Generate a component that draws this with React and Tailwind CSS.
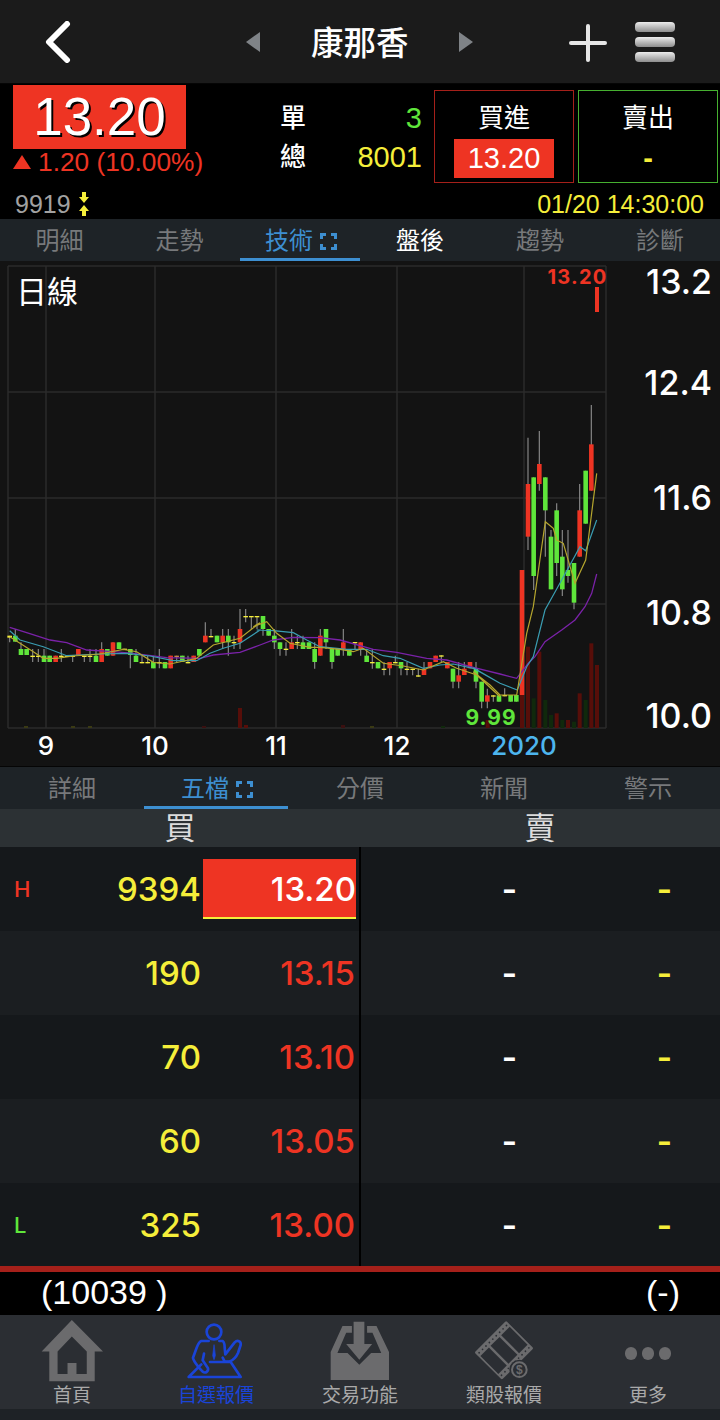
import React from "react";

const cjk = { fontFamily: '"Liberation Sans","Noto Sans CJK TC",sans-serif' };
const inter = { fontFamily: 'Inter,"Noto Sans CJK TC",sans-serif' };

// [x, top, bottom, wickTop, wickBottom, colour] in zoom coordinates
const G = "#5fe63b", R = "#ee3423", Y = "#f5ee3a";
const a3 = [
  [29,137,143,137,157,"y"],[46,137,155,117,155,G],[63,177,195,157,195,G],[80,177,195,177,195,G],[98,197,201,177,216,"y"],[115,197,201,177,216,"y"],[132,197,216,177,216,G],[149,197,216,197,216,G],[167,197,216,197,216,R],[184,197,201,177,216,"y"],[201,197,201,197,201,"y"],[218,197,201,197,216,"y"],[235,177,195,177,195,R],[253,197,201,197,216,"y"],[270,197,201,177,216,"y"],[288,197,216,177,216,G],[305,177,216,157,216,R],[322,177,197,177,197,G],[339,157,197,157,197,R],[357,157,177,157,177,G],[374,176,180,176,180,"y"],[391,177,195,177,235,G],[408,197,216,177,216,G],[426,216,220,197,220,"y"],[443,216,220,197,220,"y"],[460,216,235,197,235,G],[478,216,220,177,235,"y"],[495,216,235,216,235,G],[512,197,235,197,235,R],[530,197,201,197,216,"#c9884a"],[547,197,216,197,216,G],[564,216,220,197,220,"y"],[581,197,216,197,216,R],[598,177,197,177,197,G],[616,137,157,97,157,R],[633,138,142,117,142,"y"],[651,137,157,137,157,G],[668,137,157,117,177,R],[685,137,157,117,197,G],[702,156,160,137,177,"y"],[720,117,157,57,177,R],[737,78,82,57,97,"y"],[754,78,82,78,117,"y"],[771,78,82,78,117,"y"]
].map(([x, t, b, wt, wb, c]) => [x / 3, 590 + t / 3, 590 + b / 3, 590 + wt / 3, 590 + wb / 3, c]);
const a4 = [
  [69,78,117,78,137,G],[86,117,137,117,137,G],[103,137,157,117,177,G],[120,157,177,157,197,G],[138,176,180,157,197,"y"],[155,157,177,117,177,R],[172,156,160,137,177,"y"],[189,157,177,137,177,G],[207,157,177,157,177,G],[224,177,216,157,236,G],[241,137,197,117,197,R],[258,117,157,117,177,G],[276,177,216,177,236,G],[293,177,197,177,197,G],[310,157,177,117,197,R],[328,177,197,177,197,G],[345,156,160,156,177,"y"],[362,157,177,157,197,R],[380,197,216,177,216,G],[397,216,220,177,236,"y"],[414,216,235,216,235,G],[432,236,240,216,256,"y"],[449,216,235,216,256,R],[466,216,220,197,220,"y"],[483,216,235,216,256,G],[501,236,240,216,256,"y"],[518,236,240,236,256,"y"],[535,256,260,236,260,"y"],[552,237,255,216,255,R],[570,216,235,216,235,R],[587,197,216,197,216,R],[604,196,200,196,216,"y"],[622,216,235,216,235,R],[639,236,275,236,295,G],[656,256,275,216,295,R],[673,236,255,216,255,R],[690,216,235,216,235,R],[708,236,275,216,295,G],[725,275,335,275,355,G],[742,316,335,296,355,R],[760,316,320,316,335,"y"],[777,316,335,316,335,G]
].map(([x, t, b, wt, wb, c]) => [240 + x / 3, 590 + t / 3, 590 + b / 3, 590 + wt / 3, 590 + wb / 3, c]);
const a2 = [
  [194,885,889,865,889,"y"],[212,885,905,885,905,G],[229,885,905,885,905,G],[246,510,885,510,885,R],[264,252,410,113,450,R],[281,232,528,232,570,G],[298,192,252,93,272,R],[316,232,331,232,470,G],[333,410,568,390,568,G],[350,331,489,310,528,G],[367,470,568,390,588,G],[384,510,528,390,548,G],[402,489,608,489,628,G],[419,331,470,252,470,R],[437,212,371,212,371,G],[454,133,272,15,272,R]
].map(([x, t, b, wt, wb, c]) => [440 + x / 3, 400 + t / 3, 400 + b / 3, 400 + wt / 3, 400 + wb / 3, c]);
const candles = [...a3, ...a4, ...a2];

const pts = (list, ox, oy) => list.map(([x, y]) => `${(ox + x / 3).toFixed(1)},${(oy + y / 3).toFixed(1)}`).join(" ");
const line = (a, b, c) => [pts(a, 0, 590), pts(b, 240, 590), pts(c, 440, 400)].join(" ");
const purple = line(
  [[29,112],[80,128],[150,150],[200,158],[260,180],[340,185],[400,190],[500,203],[600,205],[640,195],[720,187],[780,165]],
  [[100,150],[160,142],[240,143],[300,150],[400,178],[470,187],[560,205],[620,210],[700,232],[780,252]],
  [[230,835],[265,790],[285,770],[315,725],[365,690],[405,660],[435,620],[455,580],[470,522]]
);
const teal = line(
  [[29,122],[60,150],[130,170],[200,197],[300,192],[380,190],[450,198],[520,212],[590,212],[630,190],[670,175],[720,160],[780,120]],
  [[50,120],[100,122],[160,128],[200,150],[240,170],[320,178],[380,178],[430,197],[480,205],[550,235],[600,225],[640,222],[700,235],[780,280]],
  [[100,803],[180,850],[232,870],[260,800],[280,770],[315,630],[365,540],[420,440],[437,452],[470,360]]
);
const yellow = line(
  [[29,140],[60,160],[100,185],[130,205],[170,205],[220,198],[300,192],[370,178],[410,185],[460,217],[510,222],[590,205],[640,165],[720,145],[780,98]],
  [[40,110],[80,95],[110,130],[150,160],[210,172],[240,172],[300,178],[340,185],[370,175],[430,220],[490,228],[550,240],[610,215],[650,235],[710,255],[780,320]],
  [[100,815],[150,855],[180,885],[230,885],[260,700],[280,620],[316,365],[340,385],[350,420],[370,430],[405,550],[437,480],[470,220]]
);
const DR = "#570e09", DG = "#10290c";
const vols = [
  [246,885,DR],[264,740,DR],[281,895,DG],[298,755,DR],[316,900,DG],[333,945,DG],[350,940,DR],[367,960,DG],[384,960,DR],[402,965,DG],[419,880,DR],[437,900,DG],[454,730,DR],[471,795,DR],[143,960,DR]
].map(([x, t, c]) => [440 + x / 3, 400 + t / 3, c]).concat([[240, 708, DR], [246, 725, DR], [26, 726, "#3a3a14"], [73, 726, "#3a3a14"], [90, 726, "#3a3a14"], [204, 726, "#3a1010"], [343, 725, "#3a1010"], [372, 726, "#3a3a14"], [443, 726, DG]]);

function Chart() {
  return (
    <svg className="block" width="720" height="505" viewBox="0 261 720 505">
      {[266, 392, 498, 604, 728].map((y) => <line key={y} x1="8" x2="606" y1={y} y2={y} stroke="#2b2b2b" strokeWidth="1.5" />)}
      {[46, 155, 276, 397, 524, 606, 8].map((x) => <line key={x} x1={x} x2={x} y1="266" y2="728" stroke="#2b2b2b" strokeWidth="1.5" />)}
      {vols.map(([x, t, c], i) => <rect key={i} x={x - 2} y={t} width="4" height={728 - t} fill={c} />)}
      {candles.map(([x, t, b, wt, wb, c], i) => (
        <g key={i}>
          <line x1={x} x2={x} y1={wt} y2={wb} stroke="#858585" strokeWidth="1.2" />
          <rect x={x - 2.3} y={t} width="4.6" height={b - t} fill={c === "y" ? Y : c} />
        </g>
      ))}
      <polyline points={purple} fill="none" stroke="#7a22a8" strokeWidth="1.3" />
      <polyline points={teal} fill="none" stroke="#3a9db2" strokeWidth="1.2" />
      <polyline points={yellow} fill="none" stroke="#b5a62e" strokeWidth="1.2" />
      <rect x="595" y="287" width="4" height="25" fill={R} />
      <g style={inter}>
        <text x="16" y="303" fill="#fff" fontSize="31" style={cjk}>日線</text>
        <text x="577.5" y="284" fill={R} fontSize="20" fontWeight="700" textAnchor="middle" letterSpacing="1.2">13.20</text>
        <text x="491" y="725" fill={G} fontSize="21" fontWeight="700" textAnchor="middle" letterSpacing="1">9.99</text>
        {[[13.2, 294], [12.4, 395], [11.6, 510], [10.8, 625], [10.0, 728]].map(([v, y]) => (
          <text key={y} x="712" y={y} fill="#fff" fontSize="34" fontWeight="500" textAnchor="end">{v.toFixed(1)}</text>
        ))}
        {[["9", 46], ["10", 155], ["11", 276], ["12", 397]].map(([v, x]) => (
          <text key={v} x={x} y="755" fill="#fff" fontSize="26" fontWeight="500" textAnchor="middle">{v}</text>
        ))}
        <text x="524" y="755" fill="#4db5ee" fontSize="26" fontWeight="500" textAnchor="middle">2020</text>
      </g>
    </svg>
  );
}

function Corners() {
  return (
    <svg width="17" height="17" viewBox="0 0 17 17" fill="none" stroke="#3d8fd1" strokeWidth="3">
      <path d="M1.5 6V1.5H6M11 1.5H15.5V6M15.5 11V15.5H11M6 15.5H1.5V11" />
    </svg>
  );
}

function Tab({ label, active, white, corners, w }) {
  return (
    <div className={`relative h-full flex items-center justify-center gap-[7px] pt-[2px] ${corners ? "pl-[2px]" : ""} ${w} ${active ? "text-[#3d8fd1]" : white ? "text-white" : "text-[#77797b]"}`}>
      <span>{label}</span>
      {corners && <Corners />}
      {active && <div className="absolute left-0 right-0 bottom-0 h-[3px] bg-[#3d8fd1]" />}
    </div>
  );
}

const rows = [
  { q: "9394", p: "13.20", tag: "H", hi: true },
  { q: "190", p: "13.15" },
  { q: "70", p: "13.10" },
  { q: "60", p: "13.05" },
  { q: "325", p: "13.00", tag: "L" },
];

const Ic = "#6b6b6d";
const NavBg = "#2b2e33";

function HomeIcon() {
  return (
    <svg width="63" height="63" viewBox="30 15 190 190">
      <path fill={Ic} fillRule="evenodd" d="M123 15 217 110H192V200H55V110H32ZM123 65 80 110V178H110V145H137V178H168V110Z" />
    </svg>
  );
}
function PersonIcon() {
  return (
    <svg className="shrink-0" width="68" height="68" viewBox="0 0 204 204" fill="none" stroke="#1a44d8" strokeWidth="8" strokeLinejoin="round" strokeLinecap="round">
      <circle cx="96" cy="45" r="22" />
      <path d="M80 72H58C52 74 48 82 44 92L33 122C33 128 46 148 62 164C70 170 80 164 78 154L62 130 66 110" />
      <path d="M112 72H122C127 76 128 84 128 92L130 112 158 76C166 68 178 72 176 84L168 108C162 122 152 130 142 134H128L122 122" />
      <path d="M58 142 20 180H176L146 135H84" />
      <path d="M96 84 92 116 96 128 100 116Z" fill="#1a44d8" strokeWidth="2" />
    </svg>
  );
}
function InboxIcon() {
  return (
    <svg width="60" height="60" viewBox="60 20 178 178">
      <path fill={Ic} d="M62 195V112L97 35H125V55H108L82 115H112L147 150 182 115H212L186 55H170V35H198L235 112V195Z" />
      <path fill={Ic} d="M130 22H162V88H185L147 135 108 88H130Z" />
    </svg>
  );
}
function FilmIcon() {
  const holes = [];
  for (let x = -58; x <= 58; x += 14.5) {
    holes.push(<rect key={`a${x}`} x={x - 2.5} y="-50" width="5" height="5" rx="2" fill={NavBg} />);
    holes.push(<rect key={`b${x}`} x={x - 2.5} y="45" width="5" height="5" rx="2" fill={NavBg} />);
  }
  return (
    <svg className="shrink-0" width="72" height="68" viewBox="0 0 216 204">
      <g transform="translate(108 100) rotate(-45)">
        <rect x="-67" y="-58" width="134" height="116" rx="4" fill={Ic} />
        {holes}
        <rect x="-62" y="-38" width="36" height="76" fill={NavBg} />
        <rect x="-19" y="-38" width="38" height="76" fill={NavBg} />
        <rect x="26" y="-38" width="36" height="76" fill={NavBg} />
      </g>
      <circle cx="154" cy="158" r="30" fill={NavBg} />
      <circle cx="154" cy="158" r="22" fill={NavBg} stroke={Ic} strokeWidth="6" />
      <text x="154" y="171" textAnchor="middle" fontSize="36" fontWeight="700" fill={Ic} style={cjk}>$</text>
    </svg>
  );
}

function NavItem({ icon, label, active }) {
  return (
    <div className="w-[144px] flex flex-col items-center">
      <div className="h-[62px] flex items-center justify-center">{icon}</div>
      <div className={`text-[19px] leading-[22px] mt-[3px] ${active ? "text-[#1a44d8]" : "text-[#a9a9a9]"}`}>{label}</div>
    </div>
  );
}

const Bar = () => <div className="h-[10px] rounded-[4px] bg-gradient-to-b from-[#ededed] to-[#8e8e8e]" />;

export default function App() {
  return (
    <div className="w-[720px] h-[1420px] bg-black overflow-hidden flex flex-col" style={cjk}>
      {/* top bar */}
      <div className="h-[84px] shrink-0 bg-[#1b1b1b] border-b border-[#050505] flex items-center">
        <svg className="ml-[43px]" width="28" height="42" viewBox="0 0 28 42" fill="none" stroke="#fff" strokeWidth="6">
          <path d="M24 3 6 21 24 39" strokeLinecap="round" strokeLinejoin="round" />
        </svg>
        <div className="ml-[175px] w-0 h-0 border-y-[10px] border-y-transparent border-r-[14px] border-r-[#7f8387]" />
        <div className="ml-[51px] text-[32.5px] text-white leading-none font-medium pt-[5px]">康那香</div>
        <div className="ml-[50px] w-0 h-0 border-y-[10px] border-y-transparent border-l-[14px] border-l-[#7f8387]" />
        <svg className="ml-[96px] mt-[2px]" width="38" height="38" viewBox="0 0 38 38" fill="#e6e6e6">
          <rect x="0" y="17" width="38" height="4" rx="2" />
          <rect x="17" y="0" width="4" height="38" rx="2" />
        </svg>
        <div className="ml-[28px] w-[40px] flex flex-col gap-[5px]">
          <Bar /><Bar /><Bar />
        </div>
      </div>

      {/* quote */}
      <div className="h-[135px] bg-black relative shrink-0">
        <div className="flex h-[100px]">
          <div className="w-[280px] pl-[13px] pt-[1px]">
            <div className="w-[173px] h-[64px] bg-[#ee3423] text-white text-[53px] leading-[64px] text-center [text-shadow:2px_2px_0_#000]">13.20</div>
            <div className="flex items-center -mt-[2px] text-[#ee3423] text-[26.3px] leading-[30px]">
              <div className="w-0 h-0 border-x-[9px] border-x-transparent border-b-[14px] border-b-[#ee3423] mr-[7px]" />
              <span>1.20 (10.00%)</span>
            </div>
          </div>
          <div className="w-[142px] text-[26px] leading-[39px] pt-[15px]">
            <div className="flex justify-between"><span className="text-white font-medium">單</span><span className="text-[#5fe63b] text-[29px]">3</span></div>
            <div className="flex justify-between"><span className="text-white font-medium">總</span><span className="text-[#f5ee3a] text-[29px]">8001</span></div>
          </div>
          <div className="ml-[12px] mt-[6px] w-[140px] h-[93px] border-[1.5px] border-[#a5201a] flex flex-col items-center pt-[11px]">
            <div className="text-white text-[26px] leading-[32px]">買進</div>
            <div className="mt-[5px] w-[100px] h-[39px] bg-[#ee3423] text-white text-[29px] leading-[39px] text-center">13.20</div>
          </div>
          <div className="ml-[4px] mt-[6px] w-[140px] h-[93px] border-[1.5px] border-[#46b030] flex flex-col items-center pt-[11px]">
            <div className="text-white text-[26px] leading-[32px]">賣出</div>
            <div className="mt-[5px] h-[39px] text-[#f5ee3a] text-[29px] leading-[39px] font-bold">-</div>
          </div>
        </div>
        <div className="flex items-center justify-between pl-[15px] pr-[16px] mt-[5px]">
          <div className="flex items-center gap-[8px] text-[#a2a2a2] text-[25px] leading-[30px]">
            <span>9919</span>
            <svg width="10" height="24" viewBox="0 0 10 24" fill="#f5ee3a">
              <path d="M3 0H7V5H10L5 11 0 5H3ZM5 13 10 19H7V24H3V19H0Z" />
            </svg>
          </div>
          <div className="text-[#f5ee3a] text-[25px] leading-[30px]">01/20 14:30:00</div>
        </div>
      </div>

      {/* tabs 1 */}
      <div className="h-[42px] shrink-0 bg-[#1e2327] flex items-center text-[24px]">
        <Tab label="明細" w="w-[119px]" />
        <Tab label="走勢" w="w-[121px]" />
        <Tab label="技術" active corners w="w-[120px]" />
        <Tab label="盤後" white w="w-[120px]" />
        <Tab label="趨勢" w="w-[120px]" />
        <Tab label="診斷" w="w-[120px]" />
      </div>

      <div className="h-[505px] shrink-0 bg-[#131313]"><Chart /></div>

      {/* tabs 2 */}
      <div className="h-[43px] shrink-0 bg-[#1e2327] border-t border-[#050505] flex items-center text-[24px]">
        <Tab label="詳細" w="w-[144px]" />
        <Tab label="五檔" active corners w="w-[144px]" />
        <Tab label="分價" w="w-[144px]" />
        <Tab label="新聞" w="w-[144px]" />
        <Tab label="警示" w="w-[144px]" />
      </div>

      <div className="h-[38px] shrink-0 bg-[#2c3134] flex items-center text-[#dcdcdc] text-[31px] pt-[3px]">
        <div className="w-[360px] text-center">買</div>
        <div className="w-[360px] text-center">賣</div>
      </div>

      {/* order book */}
      <div className="shrink-0 h-[419px] overflow-hidden" style={inter}>
        {rows.map((r, i) => (
          <div key={r.p} className={`h-[84px] flex items-center font-medium ${i % 2 ? "bg-[#1b1e21]" : "bg-[#15181b]"}`}>
            <div className={`w-[46px] pl-[14px] text-[22px] ${r.tag === "H" ? "text-[#ee3423]" : "text-[#5fe63b]"}`}>{r.tag}</div>
            <div className="w-[155px] text-right text-[#f5ee3a] text-[33px] leading-none pt-[1px]">{r.q}</div>
            {r.hi ? (
              <div className="ml-[2px] w-[153px] h-[60px] bg-[#ee3423] border-b-2 border-[#f5ee3a] text-white text-[33px] leading-[60px] text-right">{r.p}</div>
            ) : (
              <div className="ml-[2px] w-[152px] text-[#ee3423] text-[33px] leading-none text-right pt-[1px]">{r.p}</div>
            )}
            <div className={`${r.hi ? "ml-[3px]" : "ml-[4px]"} w-[2px] h-full bg-black`} />
            <div className="w-[156px] text-right text-white text-[33px] leading-none font-semibold">-</div>
            <div className="w-[155px] text-right text-[#f5ee3a] text-[33px] leading-none font-semibold">-</div>
          </div>
        ))}
      </div>

      <div className="h-[6px] shrink-0 bg-[#a5201a]" />
      <div className="h-[43px] shrink-0 bg-black flex items-center justify-between pl-[41px] pr-[40px] pb-[3px] text-white text-[34px] leading-none">
        <span>(10039 )</span>
        <span>(-)</span>
      </div>
      <div className="h-[94px] shrink-0 bg-[#2b2e33] flex pt-[5px]">
        <NavItem icon={<HomeIcon />} label="首頁" />
        <NavItem icon={<PersonIcon />} label="自選報價" active />
        <NavItem icon={<InboxIcon />} label="交易功能" />
        <NavItem icon={<FilmIcon />} label="類股報價" />
        <NavItem
          icon={
            <div className="flex gap-[5px] mt-[4px]">
              <div className="w-[12px] h-[13px] rounded-full bg-[#6b6b6d]" />
              <div className="w-[12px] h-[13px] rounded-full bg-[#6b6b6d]" />
              <div className="w-[12px] h-[13px] rounded-full bg-[#6b6b6d]" />
            </div>
          }
          label="更多"
        />
      </div>
      <div className="flex-1 bg-[#1e2226]" />
    </div>
  );
}
